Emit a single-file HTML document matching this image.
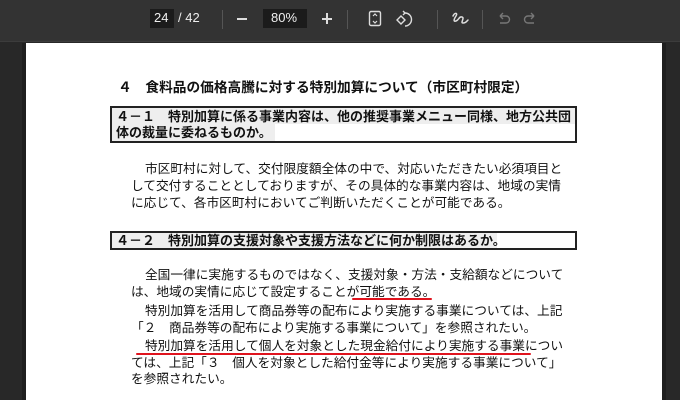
<!DOCTYPE html>
<html><head><meta charset="utf-8"><style>
*{margin:0;padding:0;box-sizing:border-box}
body{width:680px;height:400px;overflow:hidden;background:#282828;font-family:"Liberation Sans","Noto Sans CJK JP",sans-serif;position:relative}
.tb{position:absolute;left:0;top:0;width:680px;height:42px;background:#333;border-bottom:1px solid #3c3c3c}
.t{position:absolute;color:#eee;font-size:13px}
.sep{position:absolute;top:10px;width:1px;height:19px;background:#555}
.page{position:absolute;left:26px;top:43px;width:636px;height:357px;background:#fff}
.l{position:absolute;white-space:nowrap;color:#111;font-family:"Liberation Sans","Noto Sans CJK JP",sans-serif}
.b{font-size:12.7px;line-height:17px}
.h{font-weight:bold;font-size:13px;line-height:16px;font-family:"Noto Sans CJK JP",sans-serif}
.ul{position:absolute;height:2px;background:#e0141e;border-radius:1px}
</style></head><body>
<div class="tb">
<div style="position:absolute;left:150px;top:9px;width:24px;height:19px;background:#1b1b1b"></div>
<div class="t" style="left:154px;top:10px">24</div>
<div class="t" style="left:178px;top:10px">/ 42</div>
<div class="sep" style="left:222px"></div>
<div style="position:absolute;left:237px;top:18px;width:10px;height:2px;background:#ddd"></div>
<div style="position:absolute;left:263px;top:9px;width:44px;height:19px;background:#1b1b1b"></div>
<div class="t" style="left:271px;top:10px">80%</div>
<div style="position:absolute;left:322px;top:18px;width:10px;height:2px;background:#ddd"></div>
<div style="position:absolute;left:326px;top:13px;width:2px;height:11px;background:#ddd"></div>
<div class="sep" style="left:347px"></div>
<svg style="position:absolute;left:365px;top:8px" width="60" height="22" viewBox="0 0 60 22">
<rect x="4.5" y="3.5" width="11" height="14" rx="1.5" fill="none" stroke="#ddd" stroke-width="1.4"/>
<path d="M8 8l2-2 2 2M8 13l2 2 2-2" fill="none" stroke="#ddd" stroke-width="1.2"/>
<path d="M36 8l-4 4 4 4 4-4z" fill="none" stroke="#ddd" stroke-width="1.4"/>
<path d="M40 5a6 6 0 1 1 0 13" fill="none" stroke="#ddd" stroke-width="1.4"/>
<path d="M38 3l2 2-2 2" fill="none" stroke="#ddd" stroke-width="1.4"/>
</svg>
<div class="sep" style="left:437px"></div>
<svg style="position:absolute;left:450px;top:8px" width="20" height="22" viewBox="0 0 20 22">
<path d="M3 8c2-4 5-3 3 0s-3 6 0 5 3-5 6-4-2 6 1 6 4-2 5-3" fill="none" stroke="#ddd" stroke-width="1.5" stroke-linecap="round"/>
</svg>
<div class="sep" style="left:482px"></div>
<svg style="position:absolute;left:494px;top:8px" width="46" height="22" viewBox="0 0 46 22">
<path d="M6 8h6a3.5 3.5 0 0 1 0 7H6M6 8l3-3M6 8l3 3" fill="none" stroke="#777" stroke-width="1.4"/>
<path d="M40 8h-6a3.5 3.5 0 0 0 0 7h6M40 8l-3-3M40 8l-3 3" fill="none" stroke="#777" stroke-width="1.4"/>
</svg>
</div>
<div style="position:absolute;left:22px;top:43px;width:4px;height:357px;background:#1f1f1f"></div>
<div style="position:absolute;left:662px;top:43px;width:4px;height:357px;background:#1f1f1f"></div>
<div class="page"></div>

<div class="l" style="left:118px;top:79px;font-size:13.7px;font-weight:bold;line-height:18px">４　食料品の価格高騰に対する特別加算について（市区町村限定）</div>

<div style="position:absolute;left:110px;top:106px;width:467px;height:37px;border:2px solid #222;background:#fff"></div>
<div style="position:absolute;left:112px;top:108px;width:463px;height:16px;background:#eee"></div>
<div style="position:absolute;left:112px;top:124px;width:163px;height:17px;background:#eee"></div>
<div class="l h" style="left:116px;top:108px">４－１　特別加算に係る事業内容は、他の推奨事業メニュー同様、地方公共団</div>
<div class="l h" style="left:116px;top:124px">体の裁量に委ねるものか。</div>

<div class="l b" style="left:145px;top:161px">市区町村に対して、交付限度額全体の中で、対応いただきたい必須項目と</div>
<div class="l b" style="left:131px;top:178px">して交付することとしておりますが、その具体的な事業内容は、地域の実情</div>
<div class="l b" style="left:131px;top:195px">に応じて、各市区町村においてご判断いただくことが可能である。</div>

<div style="position:absolute;left:110px;top:231px;width:467px;height:19px;border:2px solid #222;background:#fff"></div>
<div style="position:absolute;left:112px;top:233px;width:385px;height:15px;background:#eee"></div>
<div class="l h" style="left:116px;top:232px">４－２　特別加算の支援対象や支援方法などに何か制限はあるか。</div>

<div class="l b" style="left:145px;top:267px">全国一律に実施するものではなく、支援対象・方法・支給額などについて</div>
<div class="l b" style="left:131px;top:284px">は、地域の実情に応じて設定することが可能である。</div>
<div class="ul" style="left:352px;top:298px;width:80px"></div>
<div class="l b" style="left:145px;top:303px">特別加算を活用して商品券等の配布により実施する事業については、上記</div>
<div class="l b" style="left:131px;top:320px">「２　商品券等の配布により実施する事業について」を参照されたい。</div>
<div class="l b" style="left:145px;top:338px">特別加算を活用して個人を対象とした現金給付により実施する事業につい</div>
<div class="ul" style="left:136px;top:353px;width:395px"></div>
<div class="l b" style="left:131px;top:355px">ては、上記「３　個人を対象とした給付金等により実施する事業について」</div>
<div class="l b" style="left:131px;top:371px">を参照されたい。</div>
</body></html>
